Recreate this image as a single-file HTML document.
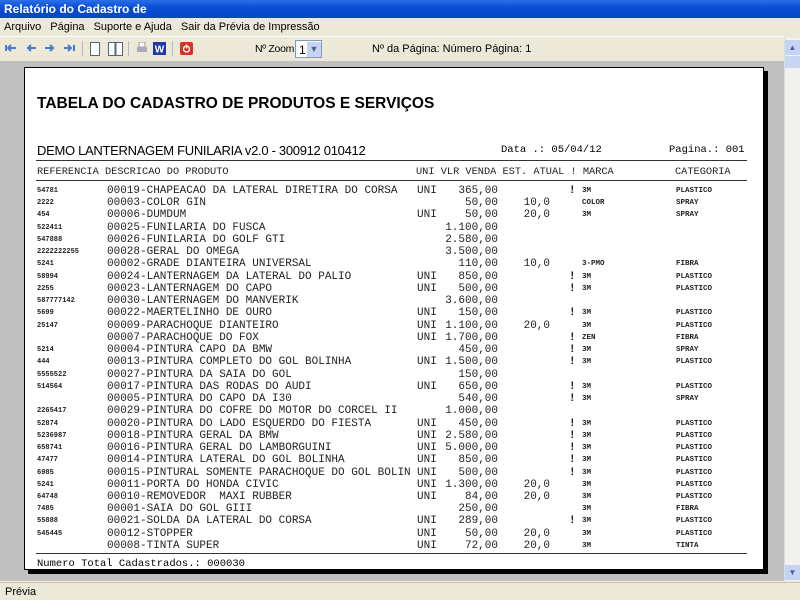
<!DOCTYPE html>
<html><head><meta charset="utf-8"><style>
*{margin:0;padding:0;box-sizing:border-box}
body{width:800px;height:600px;overflow:hidden;background:#ece9d8;font-family:Tahoma,"Liberation Sans",sans-serif;font-size:11px;position:relative}
.a{position:absolute}
#title{left:0;top:0;width:800px;height:18px;background:linear-gradient(#2d6fe8,#0a4fd6 40%,#0846c7);color:#fff;font-weight:bold;font-size:12px;padding:2px 4px}
#menu{left:0;top:18px;width:800px;height:18px;padding:3px 4px;font-size:11px}
#menu span{margin-right:9px}
#tb{left:0;top:36px;width:784px;height:24px;border-top:1px solid #fff}
#gray{left:0;top:61px;width:784px;height:520px;background:#c0c0c0}
#sb{left:784px;top:38px;width:16px;height:543px;background:#f3f1ec;border-left:1px solid #ddd}
#status{left:0;top:582px;width:800px;height:18px;background:#ece9d8;border-top:1px solid #c8c4b0;padding:3px 5px;font-size:11px}
#page{left:24px;top:67px;width:740px;height:503px;background:#fff;border:1px solid #000;box-shadow:4px 4px 0 #000}
.mono{font-family:"Liberation Mono",monospace}
.r{position:absolute;left:0;width:740px;height:12px;font-family:"Liberation Mono",monospace;font-size:11px;line-height:12px;white-space:pre;color:#222}
.r span{position:absolute}
.ref{left:12px;font-size:7px;font-weight:bold}
.d{left:82px}.u{left:392px}.v{right:267px}.e{right:215px}.x{left:544px;font-weight:bold}.m{left:557px;font-size:7.5px;font-weight:bold}.c{left:651px;font-size:7.5px;font-weight:bold}
.hl{position:absolute;left:11px;width:711px;height:1px;background:#333}
.ic{position:absolute;top:5px;width:12px;height:12px}
.h{position:absolute;top:98px;font-family:"Liberation Mono",monospace;font-size:10.3px;white-space:pre;color:#222}
</style></head><body>
<div class="a" id="title">Relatório do Cadastro de</div>
<div class="a" id="menu"><span>Arquivo</span><span>Página</span><span>Suporte e Ajuda</span><span>Sair da Prévia de Impressão</span></div>
<div class="a" id="tb">
 <svg class="ic" style="left:5px" viewBox="0 0 12 12"><path d="M1 3v6M11 6H4M6 3L3 6l3 3" stroke="#4a7bd4" stroke-width="2" fill="none"/></svg>
 <svg class="ic" style="left:25px" viewBox="0 0 12 12"><path d="M11 6H3M6 3L3 6l3 3" stroke="#4a7bd4" stroke-width="2" fill="none"/></svg>
 <svg class="ic" style="left:44px" viewBox="0 0 12 12"><path d="M1 6h8M6 3l3 3-3 3" stroke="#4a7bd4" stroke-width="2" fill="none"/></svg>
 <svg class="ic" style="left:63px" viewBox="0 0 12 12"><path d="M1 6h7M5 3l3 3-3 3M11 3v6" stroke="#4a7bd4" stroke-width="2" fill="none"/></svg>
 <div class="a" style="left:82px;top:4px;width:1px;height:15px;background:#bbb"></div>
 <svg class="ic" style="left:89px;height:14px" viewBox="0 0 12 14"><rect x="1.5" y="0.5" width="9" height="13" fill="#fff" stroke="#567"/></svg>
 <svg class="ic" style="left:108px;width:15px;height:14px" viewBox="0 0 15 14"><rect x="0.5" y="0.5" width="6.5" height="13" fill="#fff" stroke="#567"/><rect x="8" y="0.5" width="6.5" height="13" fill="#fff" stroke="#567"/></svg>
 <div class="a" style="left:128px;top:4px;width:1px;height:15px;background:#bbb"></div>
 <svg class="ic" style="left:136px" viewBox="0 0 12 12"><rect x="3" y="0" width="6" height="5" fill="#fff" stroke="#999"/><rect x="1" y="5" width="10" height="5" fill="#aab"/></svg>
 <svg class="ic" style="left:153px;width:13px;height:13px" viewBox="0 0 13 13"><rect width="13" height="13" fill="#1f3aa8"/><text x="6.5" y="10.5" font-size="10" font-weight="bold" fill="#fff" text-anchor="middle" font-family="Liberation Sans">W</text></svg>
 <div class="a" style="left:172px;top:4px;width:1px;height:15px;background:#bbb"></div>
 <svg class="ic" style="left:180px;width:13px;height:13px" viewBox="0 0 13 13"><rect width="13" height="13" rx="2" fill="#d9302a"/><circle cx="6.5" cy="7" r="3" stroke="#fff" fill="none" stroke-width="1.3"/><path d="M6.5 2.5v4" stroke="#fff" stroke-width="1.3"/></svg>
 <div class="a" style="left:255px;top:6px;font-size:10.5px;letter-spacing:-0.3px">Nº Zoom</div>
 <div class="a" style="left:295px;top:3px;width:27px;height:18px;background:#fff;border:1px solid #7f9db9;padding:2px 3px;font-size:12px">1</div>
 <div class="a" style="left:307px;top:5px;width:14px;height:15px;background:#c4d3f6;color:#4d6185;font-size:9px;text-align:center;line-height:15px">&#9660;</div>
 <div class="a" style="left:372px;top:6px">Nº da Página: Número Página: 1</div>
</div>
<div class="a" id="gray"></div>
<div class="a" id="sb"><div style="margin-top:2px;width:15px;height:15px;background:#c4d3f6;color:#4d6185;font-size:8px;text-align:center;line-height:15px">&#9650;</div><div style="width:15px;height:12px;background:#c8d6f5;margin-top:1px"></div><div style="position:absolute;bottom:1px;width:15px;height:15px;background:#c4d3f6;color:#4d6185;font-size:8px;text-align:center;line-height:15px">&#9660;</div></div>
<div class="a" id="status">Prévia</div>
<div class="a" id="page">
 <div class="a" style="left:12px;top:27px;font-family:'Liberation Sans',sans-serif;font-weight:bold;font-size:15.5px">TABELA DO CADASTRO DE PRODUTOS E SERVIÇOS</div>
 <div class="a" style="left:12px;top:75px;font-family:'Liberation Sans',sans-serif;font-size:13px;letter-spacing:-0.3px">DEMO LANTERNAGEM FUNILARIA v2.0 - 300912 010412</div>
 <div class="a mono" style="left:476px;top:76px;font-size:10.5px">Data .: 05/04/12</div>
 <div class="a mono" style="left:644px;top:76px;font-size:10.5px">Pagina.: 001</div>
 <div class="hl" style="top:92px"></div>
 <div class="h" style="left:12px">REFERENCIA DESCRICAO DO PRODUTO</div>
 <div class="h" style="left:391px">UNI VLR VENDA EST. ATUAL ! MARCA</div>
 <div class="h" style="left:650px">CATEGORIA</div>
 <div class="hl" style="top:112px"></div>
 <div class="a" style="left:0;top:117px">
<div class="r" style="top:0px"><span class="ref">54781</span><span class="d">00019-CHAPEACAO DA LATERAL DIRETIRA DO CORSA</span><span class="u">UNI</span><span class="v">365,00</span><span class="x">!</span><span class="m">3M</span><span class="c">PLASTICO</span></div>
<div class="r" style="top:12.24px"><span class="ref">2222</span><span class="d">00003-COLOR GIN</span><span class="v">50,00</span><span class="e">10,0</span><span class="m">COLOR</span><span class="c">SPRAY</span></div>
<div class="r" style="top:24.48px"><span class="ref">454</span><span class="d">00006-DUMDUM</span><span class="u">UNI</span><span class="v">50,00</span><span class="e">20,0</span><span class="m">3M</span><span class="c">SPRAY</span></div>
<div class="r" style="top:36.72px"><span class="ref">522411</span><span class="d">00025-FUNILARIA DO FUSCA</span><span class="v">1.100,00</span></div>
<div class="r" style="top:48.96px"><span class="ref">547888</span><span class="d">00026-FUNILARIA DO GOLF GTI</span><span class="v">2.580,00</span></div>
<div class="r" style="top:61.2px"><span class="ref">2222222255</span><span class="d">00028-GERAL DO OMEGA</span><span class="v">3.500,00</span></div>
<div class="r" style="top:73.44px"><span class="ref">5241</span><span class="d">00002-GRADE DIANTEIRA UNIVERSAL</span><span class="v">110,00</span><span class="e">10,0</span><span class="m">3-PMO</span><span class="c">FIBRA</span></div>
<div class="r" style="top:85.68px"><span class="ref">58994</span><span class="d">00024-LANTERNAGEM DA LATERAL DO PALIO</span><span class="u">UNI</span><span class="v">850,00</span><span class="x">!</span><span class="m">3M</span><span class="c">PLASTICO</span></div>
<div class="r" style="top:97.92px"><span class="ref">2255</span><span class="d">00023-LANTERNAGEM DO CAPO</span><span class="u">UNI</span><span class="v">500,00</span><span class="x">!</span><span class="m">3M</span><span class="c">PLASTICO</span></div>
<div class="r" style="top:110.16px"><span class="ref">587777142</span><span class="d">00030-LANTERNAGEM DO MANVERIK</span><span class="v">3.600,00</span></div>
<div class="r" style="top:122.4px"><span class="ref">5699</span><span class="d">00022-MAERTELINHO DE OURO</span><span class="u">UNI</span><span class="v">150,00</span><span class="x">!</span><span class="m">3M</span><span class="c">PLASTICO</span></div>
<div class="r" style="top:134.64px"><span class="ref">25147</span><span class="d">00009-PARACHOQUE DIANTEIRO</span><span class="u">UNI</span><span class="v">1.100,00</span><span class="e">20,0</span><span class="m">3M</span><span class="c">PLASTICO</span></div>
<div class="r" style="top:146.88px"><span class="d">00007-PARACHOQUE DO FOX</span><span class="u">UNI</span><span class="v">1.700,00</span><span class="x">!</span><span class="m">ZEN</span><span class="c">FIBRA</span></div>
<div class="r" style="top:159.12px"><span class="ref">5214</span><span class="d">00004-PINTURA CAPO DA BMW</span><span class="v">450,00</span><span class="x">!</span><span class="m">3M</span><span class="c">SPRAY</span></div>
<div class="r" style="top:171.36px"><span class="ref">444</span><span class="d">00013-PINTURA COMPLETO DO GOL BOLINHA</span><span class="u">UNI</span><span class="v">1.500,00</span><span class="x">!</span><span class="m">3M</span><span class="c">PLASTICO</span></div>
<div class="r" style="top:183.6px"><span class="ref">5555522</span><span class="d">00027-PINTURA DA SAIA DO GOL</span><span class="v">150,00</span></div>
<div class="r" style="top:195.84px"><span class="ref">514564</span><span class="d">00017-PINTURA DAS RODAS DO AUDI</span><span class="u">UNI</span><span class="v">650,00</span><span class="x">!</span><span class="m">3M</span><span class="c">PLASTICO</span></div>
<div class="r" style="top:208.08px"><span class="d">00005-PINTURA DO CAPO DA I30</span><span class="v">540,00</span><span class="x">!</span><span class="m">3M</span><span class="c">SPRAY</span></div>
<div class="r" style="top:220.32px"><span class="ref">2265417</span><span class="d">00029-PINTURA DO COFRE DO MOTOR DO CORCEL II</span><span class="v">1.000,00</span></div>
<div class="r" style="top:232.56px"><span class="ref">52874</span><span class="d">00020-PINTURA DO LADO ESQUERDO DO FIESTA</span><span class="u">UNI</span><span class="v">450,00</span><span class="x">!</span><span class="m">3M</span><span class="c">PLASTICO</span></div>
<div class="r" style="top:244.8px"><span class="ref">5236987</span><span class="d">00018-PINTURA GERAL DA BMW</span><span class="u">UNI</span><span class="v">2.580,00</span><span class="x">!</span><span class="m">3M</span><span class="c">PLASTICO</span></div>
<div class="r" style="top:257.04px"><span class="ref">658741</span><span class="d">00016-PINTURA GERAL DO LAMBORGUINI</span><span class="u">UNI</span><span class="v">5.000,00</span><span class="x">!</span><span class="m">3M</span><span class="c">PLASTICO</span></div>
<div class="r" style="top:269.28px"><span class="ref">47477</span><span class="d">00014-PINTURA LATERAL DO GOL BOLINHA</span><span class="u">UNI</span><span class="v">850,00</span><span class="x">!</span><span class="m">3M</span><span class="c">PLASTICO</span></div>
<div class="r" style="top:281.52px"><span class="ref">6985</span><span class="d">00015-PINTURAL SOMENTE PARACHOQUE DO GOL BOLIN</span><span class="u">UNI</span><span class="v">500,00</span><span class="x">!</span><span class="m">3M</span><span class="c">PLASTICO</span></div>
<div class="r" style="top:293.76px"><span class="ref">5241</span><span class="d">00011-PORTA DO HONDA CIVIC</span><span class="u">UNI</span><span class="v">1.300,00</span><span class="e">20,0</span><span class="m">3M</span><span class="c">PLASTICO</span></div>
<div class="r" style="top:306px"><span class="ref">64748</span><span class="d">00010-REMOVEDOR  MAXI RUBBER</span><span class="u">UNI</span><span class="v">84,00</span><span class="e">20,0</span><span class="m">3M</span><span class="c">PLASTICO</span></div>
<div class="r" style="top:318.24px"><span class="ref">7485</span><span class="d">00001-SAIA DO GOL GIII</span><span class="v">250,00</span><span class="m">3M</span><span class="c">FIBRA</span></div>
<div class="r" style="top:330.48px"><span class="ref">55888</span><span class="d">00021-SOLDA DA LATERAL DO CORSA</span><span class="u">UNI</span><span class="v">289,00</span><span class="x">!</span><span class="m">3M</span><span class="c">PLASTICO</span></div>
<div class="r" style="top:342.72px"><span class="ref">545445</span><span class="d">00012-STOPPER</span><span class="u">UNI</span><span class="v">50,00</span><span class="e">20,0</span><span class="m">3M</span><span class="c">PLASTICO</span></div>
<div class="r" style="top:354.96px"><span class="d">00008-TINTA SUPER</span><span class="u">UNI</span><span class="v">72,00</span><span class="e">20,0</span><span class="m">3M</span><span class="c">TINTA</span></div>
 </div>
 <div class="hl" style="top:485px"></div>
 <div class="a mono" style="left:12px;top:490px;font-size:10.5px">Numero Total Cadastrados.: 000030</div>
</div>
</body></html>
